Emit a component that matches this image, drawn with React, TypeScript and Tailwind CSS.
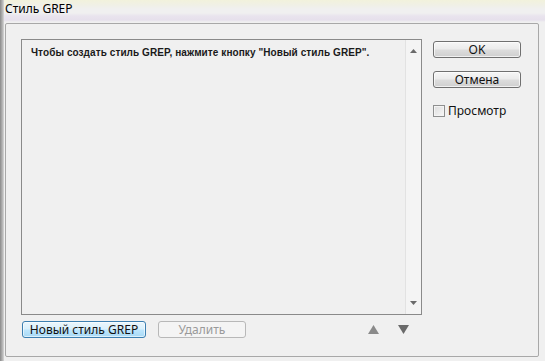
import React from "react";

const ui = { fontFamily: '"Noto Sans", "Open Sans", Arial, sans-serif' };

function Btn({ children, w, variant = "normal" }: { children: React.ReactNode; w: string; variant?: "normal" | "blue" | "disabled" }) {
  const base = "h-[17px] rounded-[3px] border flex items-center justify-center text-[12px] leading-none";
  if (variant === "blue")
    return (
      <div className={`${base} ${w} border-[#3c7fb1] text-[#111] bg-[linear-gradient(to_bottom,#eaf6fd_0%,#d9f0fc_48%,#bee6fd_52%,#a7d9f5_100%)] shadow-[inset_0_0_0_1px_rgba(255,255,255,0.6)]`}>
        {children}
      </div>
    );
  if (variant === "disabled")
    return (
      <div className={`${base} ${w} border-[#b8b8b8] text-[#9a9a9a] bg-[#f4f4f4]`}>{children}</div>
    );
  return (
    <div className={`${base} ${w} border-[#707070] text-[#111] bg-[linear-gradient(to_bottom,#f6f6f6_0%,#ebebeb_48%,#dddddd_52%,#cfcfcf_100%)] shadow-[inset_0_0_0_1px_rgba(255,255,255,0.7)]`}>
      {children}
    </div>
  );
}

export default function App() {
  return (
    <div className="w-[545px] h-[361px] bg-[#f0f0f0] flex overflow-hidden" style={ui}>
      <div className="w-[4px] h-full bg-[linear-gradient(to_right,#8a8a8a,#b5b5b5_60%,#d8d8d8)]" />
      <div className="flex-1 flex flex-col">
        <div className="h-[23px] pl-[1px] flex items-start bg-[linear-gradient(to_bottom,#f2f2dc_0px,#f0f0e6_5px,#f0f0f0_9px,#f0f0f0_13px,#e9e4ee_16px,#e6e0ec_20px,#f0f0f0_22px)]">
          <span className="text-[12px] leading-none text-black mt-[3px]">Стиль GREP</span>
        </div>
        <div className="ml-[1px] w-[534px] h-[334px] border border-[#a8a8a8] rounded-[2px] flex">
          <div className="pl-[15px] pt-[15px] flex flex-col">
            <div className="w-[401px] h-[276px] border border-[#8a8a8a] flex bg-[#f0f0f0]">
              <div className="flex-1 pl-[9px] pt-[6px] text-[11px] leading-none">
                <span className="text-[10px] tracking-[0.08px] font-bold text-[#1a1a1a] leading-none whitespace-nowrap" style={{ fontFamily: '"Liberation Sans", Arial, sans-serif' }}>
                  Чтобы создать стиль GREP, нажмите кнопку "Новый стиль GREP".
                </span>
              </div>
              <div className="w-[16px] h-full border-l border-[#e2e2e2] bg-[#f4f4f4] flex flex-col items-center justify-between py-[9px]">
                <svg width="7" height="4" viewBox="0 0 7 4"><path d="M0 4 L3.5 0 L7 4 Z" fill="#6a6a6a" /></svg>
                <svg width="7" height="4" viewBox="0 0 7 4"><path d="M0 0 L3.5 4 L7 0 Z" fill="#6a6a6a" /></svg>
              </div>
            </div>
            <div className="mt-[6px] flex items-center">
              <div className="ml-[1px]">
                <Btn w="w-[124px]" variant="blue">Новый стиль GREP</Btn>
              </div>
              <div className="ml-[12px]">
                <Btn w="w-[88px]" variant="disabled">Удалить</Btn>
              </div>
              <div className="ml-[122px] flex items-center gap-[19px]">
                <svg width="11" height="9" viewBox="0 0 11 9"><path d="M0 9 L5.5 0 L11 9 Z" fill="#8a8a8a" /></svg>
                <svg width="11" height="9" viewBox="0 0 11 9"><path d="M0 0 L5.5 9 L11 0 Z" fill="#6a6a6a" /></svg>
              </div>
            </div>
          </div>
          <div className="pl-[11px] pt-[17px] flex flex-col">
            <Btn w="w-[88px]">OK</Btn>
            <div className="mt-[13px]">
              <Btn w="w-[88px]">Отмена</Btn>
            </div>
            <div className="mt-[17px] flex items-center">
              <div className="w-[12px] h-[12px] border border-[#8e8f8f] bg-[linear-gradient(135deg,#dcdcdc,#f8f8f8)] shadow-[inset_0_0_0_1px_#f4f4f4]" />
              <span className="ml-[3px] text-[12px] leading-none text-[#111]">Просмотр</span>
            </div>
          </div>
        </div>
      </div>
    </div>
  );
}
